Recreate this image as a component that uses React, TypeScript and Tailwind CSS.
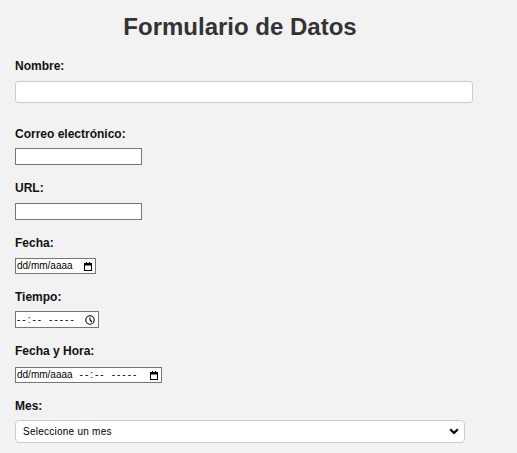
import React from "react";

const Calendar = () => (
  <svg width="8" height="9" viewBox="0 0 8 9" className="block">
    <rect x="0.5" y="1.5" width="7" height="7" fill="none" stroke="#000" strokeWidth="1" />
    <rect x="0.5" y="1.5" width="7" height="2" fill="#000" />
    <rect x="2" y="0" width="1" height="2" fill="#000" />
    <rect x="5" y="0" width="1" height="2" fill="#000" />
  </svg>
);

const Clock = () => (
  <svg width="10" height="10" viewBox="0 0 10 10" className="block">
    <circle cx="5" cy="5" r="4.2" fill="none" stroke="#000" strokeWidth="1.1" />
    <path d="M5 2.5 V5 L7 7" fill="none" stroke="#000" strokeWidth="1.1" />
  </svg>
);

const Label = ({ children, className = "" }: { children: React.ReactNode; className?: string }) => (
  <div className={`text-[12px] leading-[14px] font-bold text-[#111] ${className}`}>{children}</div>
);

const DateText = () => <span className="text-[10px] leading-[12px] text-black">dd/mm/aaaa</span>;

const TimeText = ({ className = "" }: { className?: string }) => (
  <span className={`flex items-center text-[10px] leading-[12px] text-black ${className}`}>
    <span className="tracking-[2px]">--:--</span>
    <span className="ml-[6px] tracking-[2px]">-----</span>
  </span>
);

export default function App() {
  return (
    <div className="min-h-screen bg-[#f2f2f2] font-['Liberation_Sans',Arial,sans-serif]">
      <div className="w-[480px] px-[15px] pt-[13px]">
        <h1 className="text-[24px] leading-[28px] font-bold text-center text-[#333]">Formulario de Datos</h1>

        <Label className="mt-[18px]">Nombre:</Label>
        <div className="mt-[8px] w-[458px] h-[22px] bg-white border border-[#cccccc] rounded-[3px]" />

        <Label className="mt-[24px]">Correo electrónico:</Label>
        <div className="mt-[7px] w-[127px] h-[17px] bg-white border border-[#767676]" />

        <Label className="mt-[16px]">URL:</Label>
        <div className="mt-[8px] w-[127px] h-[17px] bg-white border border-[#767676]" />

        <Label className="mt-[16px]">Fecha:</Label>
        <div className="mt-[8px] w-[81px] h-[16px] bg-white border border-[#767676] flex items-center pl-[1px] pr-[3px] justify-between">
          <DateText />
          <Calendar />
        </div>

        <Label className="mt-[16px]">Tiempo:</Label>
        <div className="mt-[7px] w-[84px] h-[17px] bg-white border border-[#767676] flex items-center pl-[1px] pr-[3px] justify-between">
          <TimeText />
          <Clock />
        </div>

        <Label className="mt-[16px]">Fecha y Hora:</Label>
        <div className="mt-[9px] w-[147px] h-[16px] bg-white border border-[#767676] flex items-center pl-[1px] pr-[3px] justify-between">
          <span className="flex items-center">
            <DateText />
            <TimeText className="ml-[7px]" />
          </span>
          <Calendar />
        </div>

        <Label className="mt-[16px]">Mes:</Label>
        <div className="mt-[7px] w-[450px] h-[23px] bg-white border border-[#cccccc] rounded-[4px] flex items-center justify-between pl-[7px] pr-[5px]">
          <span className="text-[10px] leading-[12px] text-black tracking-[0.25px]">Seleccione un mes</span>
          <svg width="10" height="7" viewBox="0 0 10 7" className="block">
            <path d="M1.2 1.2 L5 5 L8.8 1.2" fill="none" stroke="#000" strokeWidth="2.2" />
          </svg>
        </div>
      </div>
    </div>
  );
}
